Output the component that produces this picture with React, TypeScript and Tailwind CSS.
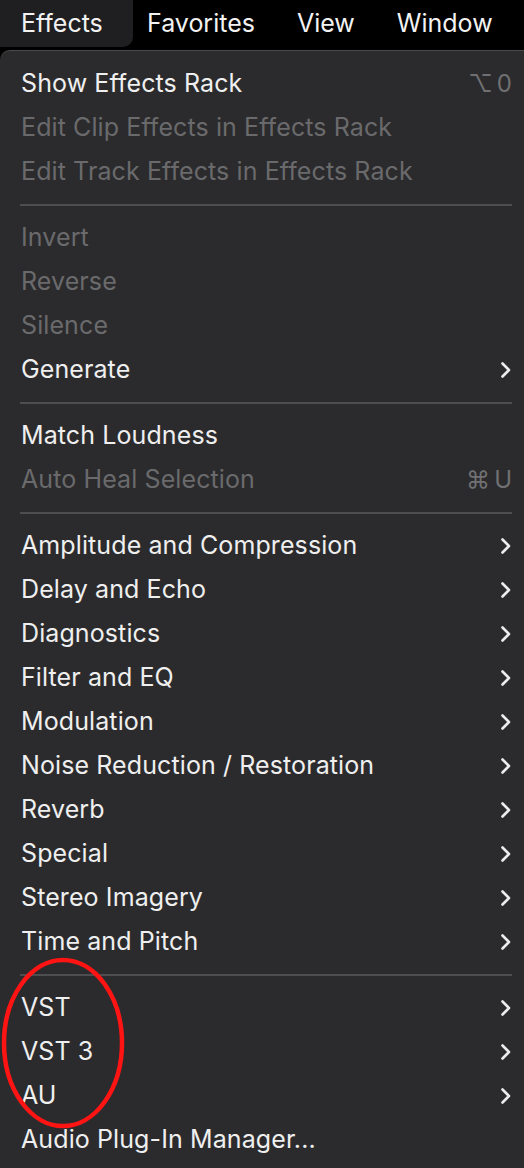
import React from 'react';

type Item =
    | { sep: true }
    | { label: string; disabled?: boolean; sub?: boolean; shortcut?: string; sep?: false };

const items: Item[] = [
    { label: 'Show Effects Rack', shortcut: '⌥0' },
    { label: 'Edit Clip Effects in Effects Rack', disabled: true },
    { label: 'Edit Track Effects in Effects Rack', disabled: true },
    { sep: true },
    { label: 'Invert', disabled: true },
    { label: 'Reverse', disabled: true },
    { label: 'Silence', disabled: true },
    { label: 'Generate', sub: true },
    { sep: true },
    { label: 'Match Loudness' },
    { label: 'Auto Heal Selection', disabled: true, shortcut: '⌘U' },
    { sep: true },
    { label: 'Amplitude and Compression', sub: true },
    { label: 'Delay and Echo', sub: true },
    { label: 'Diagnostics', sub: true },
    { label: 'Filter and EQ', sub: true },
    { label: 'Modulation', sub: true },
    { label: 'Noise Reduction / Restoration', sub: true },
    { label: 'Reverb', sub: true },
    { label: 'Special', sub: true },
    { label: 'Stereo Imagery', sub: true },
    { label: 'Time and Pitch', sub: true },
    { sep: true },
    { label: 'VST', sub: true },
    { label: 'VST 3', sub: true },
    { label: 'AU', sub: true },
    { label: 'Audio Plug-In Manager...' },
];

function Chevron() {
    return (
        <svg width="12" height="18" viewBox="0 0 12 18" fill="none" className="shrink-0">
            <path d="M2.5 2.5 L9 9 L2.5 15.5" stroke="#ececec" strokeWidth="2.6" strokeLinecap="round" strokeLinejoin="round" />
        </svg>
    );
}

export default function App() {
    return (
        <div
            className="relative w-[524px] h-[1168px] overflow-hidden bg-black text-[25px]"
            style={{ fontFamily: 'Inter, "Liberation Sans", sans-serif' }}
        >
            {/* Menu bar */}
            <div className="flex h-[50px] items-start text-[#f2f2f2]">
                <div className="h-[47px] w-[133px] pl-[21px] flex items-center bg-[#1f1f21] rounded-br-[10px]">
                    Effects
                </div>
                <div className="h-[47px] flex items-center ml-[14px]">Favorites</div>
                <div className="h-[47px] flex items-center ml-[42px]">View</div>
                <div className="h-[47px] flex items-center ml-[42px]">Window</div>
            </div>

            {/* Dropdown */}
            <div className="h-[1118px] bg-[#2b2b2d] border-t border-[#4a4a4c] rounded-tl-[10px] pt-[11px]">
                {items.map((it, i) =>
                    it.sep ? (
                        <div key={i} className="h-[22px] flex items-center pl-[20px] pr-[12px]">
                            <div className="h-[2px] w-full bg-[#4e4e50]" />
                        </div>
                    ) : (
                        <div
                            key={i}
                            className={
                                'h-[44px] flex items-center justify-between pl-[21px] pr-[12px] ' +
                                (it.disabled ? 'text-[#6a6a6c]' : 'text-[#efefef]')
                            }
                        >
                            <span className="tracking-[0.1px]">{it.label}</span>
                            {it.sub && <Chevron />}
                            {it.shortcut && (
                                <span className="text-[#707072] tracking-[4px] -mr-[4px] text-[24px]">{it.shortcut}</span>
                            )}
                        </div>
                    )
                )}
            </div>

            {/* red annotation */}
            <svg className="absolute left-0 top-[955px] pointer-events-none" width="130" height="180" viewBox="0 0 130 180">
                <ellipse cx="63" cy="88" rx="59" ry="83" fill="none" stroke="#ff1414" strokeWidth="4.5" />
            </svg>
        </div>
    );
}
